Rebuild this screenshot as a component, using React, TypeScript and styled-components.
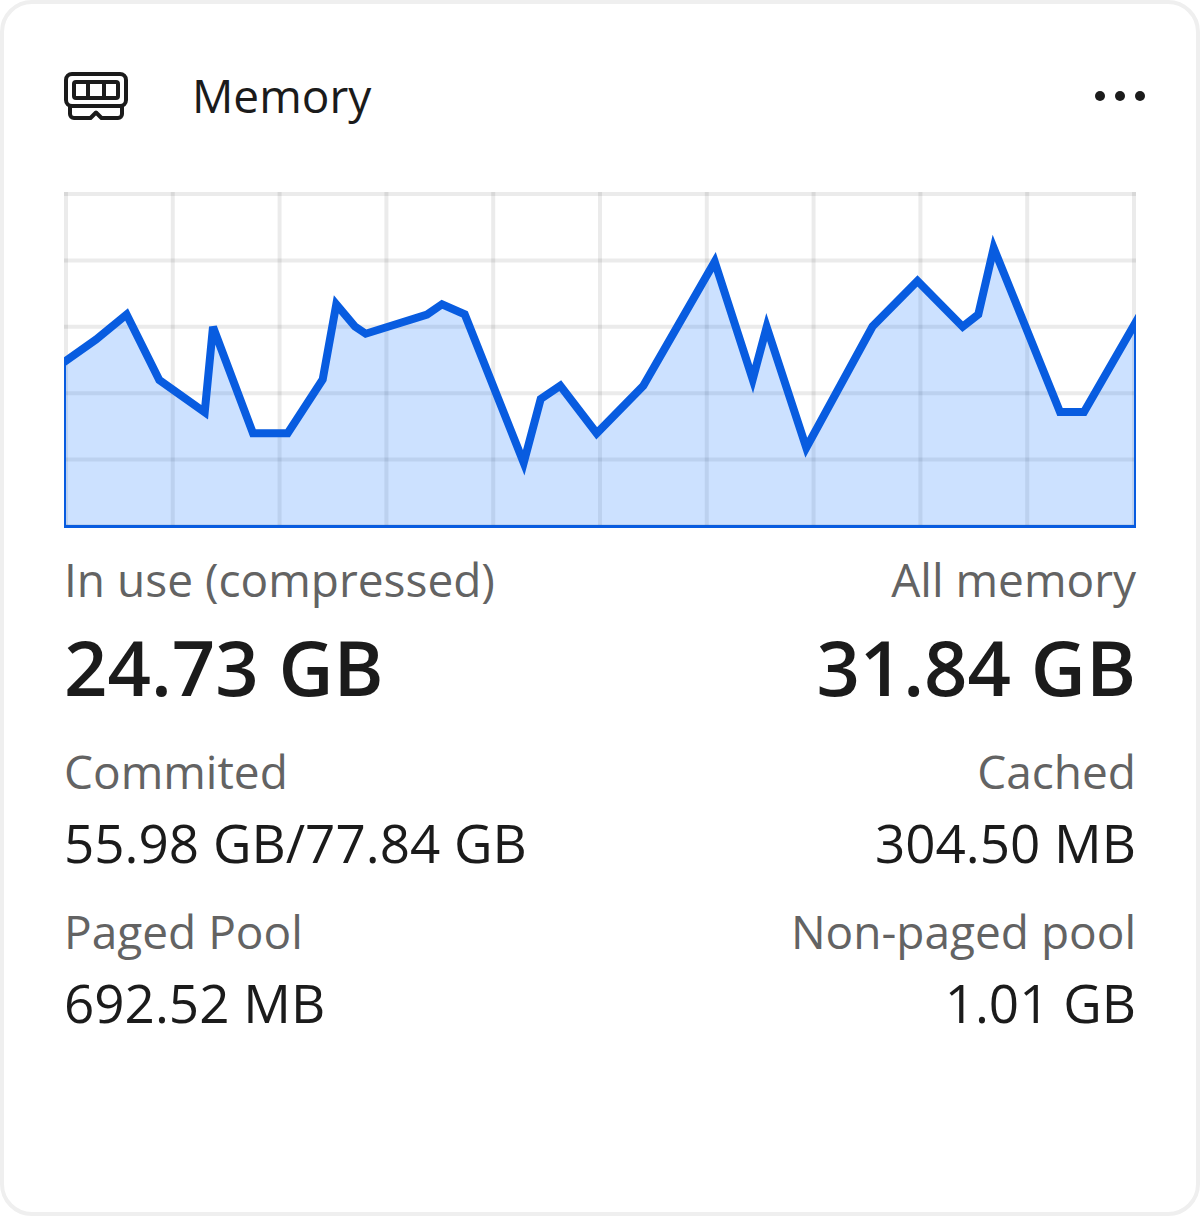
import React from "react";
import styled, { createGlobalStyle } from "styled-components";

const GlobalStyle = createGlobalStyle`
  *, *::before, *::after { box-sizing: border-box; }
  body {
    margin: 0;
    background: #ffffff;
    color: #1b1b1b;
    font-family: "Segoe UI Variable", "Segoe UI", "Open Sans", "Noto Sans", sans-serif;
  }
`;

const Card = styled.article`
  display: flex;
  flex-direction: column;
  min-height: 100vh;
  padding: 60px;
  border: 4px solid #efefef;
  border-radius: 32px;
  background: #ffffff;
`;

const Header = styled.header`
  display: flex;
  align-items: center;
  gap: 64px;
  height: 64px;
  margin-right: -16px;
  margin-bottom: 64px;
`;

const Title = styled.h1`
  flex: 1;
  margin: 0;
  font-size: 46px;
  line-height: 62px;
  font-weight: 400;
  padding-bottom: 2px;
`;

const Icon = styled.svg`
  display: block;
  width: 64px;
  height: 64px;
`;

const MoreButton = styled.button`
  padding: 0;
  border: 0;
  background: none;
  color: inherit;
  cursor: pointer;
`;

const Chart = styled.svg`
  display: block;
  width: 100%;
  height: auto;
`;

const Stats = styled.dl`
  display: grid;
  gap: 16px;
  margin: 19px 0 0;
`;

const StatRow = styled.div`
  display: flex;
  justify-content: space-between;
`;

const Stat = styled.div`
  &:last-child { text-align: right; }
`;

const Label = styled.dt`
  color: #636363;
  font-size: 46px;
  line-height: 64px;
`;

const Value = styled.dd<{ $large?: boolean }>`
  margin: 0;
  font-size: ${(p) => (p.$large ? 76 : 53)}px;
  line-height: ${(p) => (p.$large ? 112 : 80)}px;
  font-weight: ${(p) => (p.$large ? 600 : 400)};
`;

const WIDTH = 1072;
const HEIGHT = 336;
const COLUMNS = 10;
const ROWS = 5;

const usage: [number, number][] = [
  [-4, 173], [32, 147.5], [62.6, 122.5], [95.3, 188], [140.7, 220.2],
  [149, 135], [189, 241.3], [223.7, 241.3], [258.7, 187.5], [272.3, 112.3],
  [291, 134.5], [301.7, 141.7], [363, 122.5], [378, 112.3], [400.7, 122.3],
  [459.7, 270.7], [476.7, 207], [496.3, 193.7], [532.7, 241.3], [579.3, 193.7],
  [650.7, 69.7], [688.7, 187.3], [702.7, 135], [742.3, 255.7], [808.5, 134.5],
  [853.5, 89], [898.7, 134.7], [914.3, 122.4], [929.7, 56], [996, 220],
  [1020, 220], [1080, 116],
];

const points = usage.map((p) => p.join(",")).join(" ");

function UsageChart() {
  return (
    <Chart viewBox={`0 0 ${WIDTH} ${HEIGHT}`} role="img" aria-label="Memory usage over time">
      <g stroke="#000000" strokeOpacity="0.08" strokeWidth="4">
        {Array.from({ length: COLUMNS + 1 }, (_, i) => {
          const x = 2 + (i * (WIDTH - 4)) / COLUMNS;
          return <line key={i} x1={x} x2={x} y1="0" y2={HEIGHT} />;
        })}
      </g>
      <g stroke="#000000" strokeOpacity="0.08" strokeWidth="4">
        {Array.from({ length: ROWS + 1 }, (_, i) => {
          const y = 2 + (i * (HEIGHT - 4)) / ROWS;
          return <line key={i} x1="0" x2={WIDTH} y1={y} y2={y} />;
        })}
      </g>
      <polygon points={`-4,${HEIGHT} ${points} 1080,${HEIGHT}`} fill="#0067ff" fillOpacity="0.2" />
      <g fill="none" stroke="#085ce0">
        <polyline points={points} strokeWidth="8" />
        <path d="M1 170V336M1071 132V336" strokeWidth="2" />
        <path d="M0 334.5H1072" strokeWidth="3" />
      </g>
    </Chart>
  );
}

function MemoryIcon() {
  return (
    <Icon viewBox="0 0 64 64" fill="none" stroke="currentColor" strokeWidth="4" strokeLinejoin="round" aria-hidden="true">
      <rect x="2" y="10" width="60" height="32" rx="6" />
      <rect x="10" y="18" width="44" height="16" rx="2" />
      <path d="M24 18v16M40 18v16" />
      <path d="M6 42v8a4 4 0 0 0 4 4h16.500l5.500-5.500 5.500 5.500H54a4 4 0 0 0 4-4v-8" />
    </Icon>
  );
}

function MoreIcon() {
  return (
    <Icon viewBox="0 0 64 64" fill="currentColor" aria-hidden="true">
      <circle cx="12" cy="32" r="5" />
      <circle cx="32" cy="32" r="5" />
      <circle cx="52" cy="32" r="5" />
    </Icon>
  );
}

const rows = [
  { large: true, stats: [["In use (compressed)", "24.73 GB"], ["All memory", "31.84 GB"]] },
  { large: false, stats: [["Commited", "55.98 GB/77.84 GB"], ["Cached", "304.50 MB"]] },
  { large: false, stats: [["Paged Pool", "692.52 MB"], ["Non-paged pool", "1.01 GB"]] },
];

export default function App() {
  return (
    <>
      <GlobalStyle />
      <Card>
        <Header>
          <MemoryIcon />
          <Title>Memory</Title>
          <MoreButton type="button" aria-label="More options">
            <MoreIcon />
          </MoreButton>
        </Header>
        <UsageChart />
        <Stats>
          {rows.map((row) => (
            <StatRow key={row.stats[0][0]}>
              {row.stats.map(([label, value]) => (
                <Stat key={label}>
                  <Label>{label}</Label>
                  <Value $large={row.large}>{value}</Value>
                </Stat>
              ))}
            </StatRow>
          ))}
        </Stats>
      </Card>
    </>
  );
}
